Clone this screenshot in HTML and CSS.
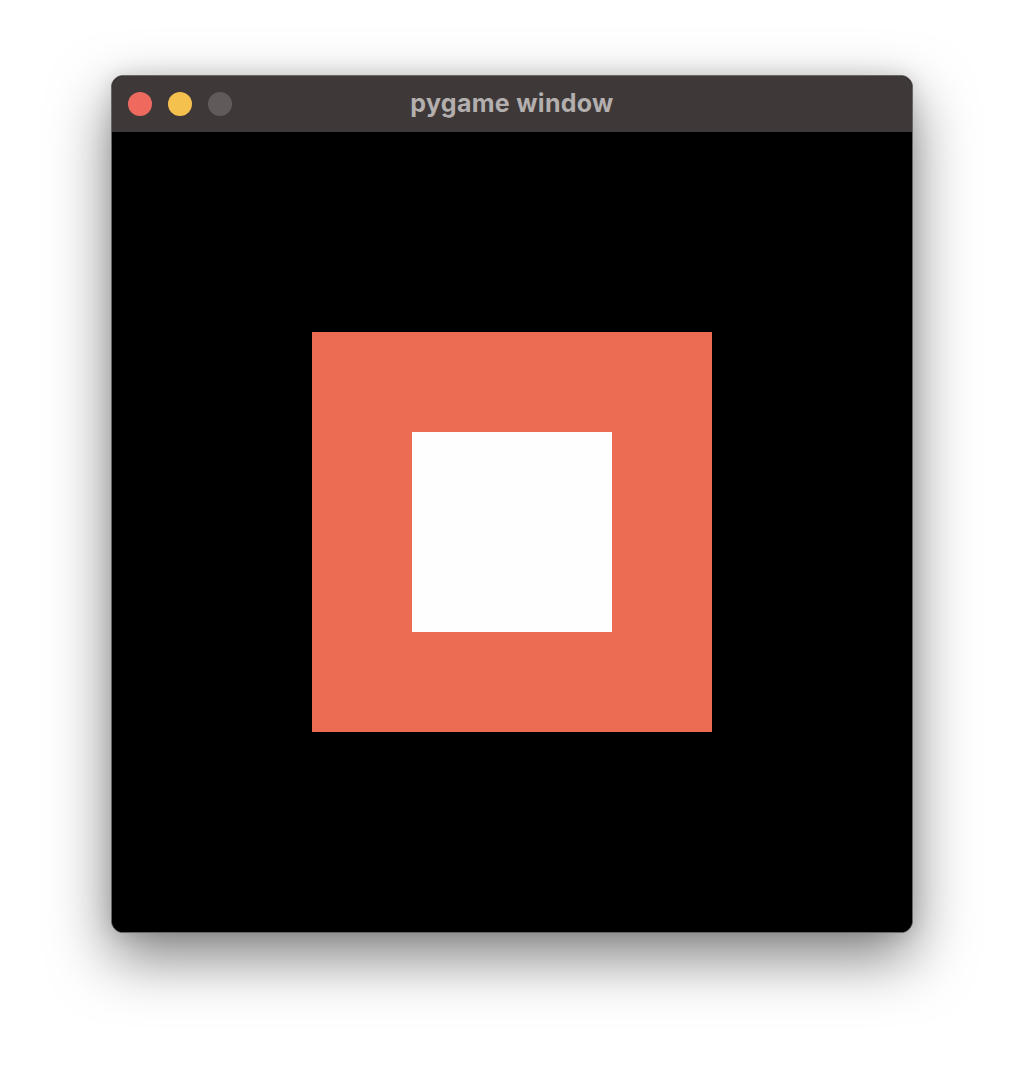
FILE: index.html
```html
<!DOCTYPE html>
<html>
<head>
<meta charset="utf-8">
<link rel="stylesheet" href="styles.css">
</head>
<body>
<div class="page">
  <div class="window">
    <div class="titlebar">
      <div class="lights">
        <span class="light red"></span>
        <span class="light yellow"></span>
        <span class="light gray"></span>
      </div>
      <div class="title">pygame window</div>
    </div>
    <div class="canvas">
      <div class="outer">
        <div class="inner"></div>
      </div>
    </div>
  </div>
</div>
</body>
</html>
```
FILE: styles.css
```css
html, body {
  margin: 0;
  padding: 0;
  background: #ffffff;
}
.page {
  width: 1024px;
  height: 1080px;
  padding: 75px 0 0 111px;
  box-sizing: border-box;
}
.window {
  width: 802px;
  border: 1px solid #6a6666;
  border-radius: 12px;
  overflow: hidden;
  box-sizing: border-box;
  box-shadow: 0 24px 60px rgba(0, 0, 0, 0.5), 0 0 20px rgba(0, 0, 0, 0.12);
  background: #000;
}
.titlebar {
  height: 56px;
  background: #3e3838;
  position: relative;
  display: flex;
  align-items: center;
  justify-content: center;
}
.lights {
  position: absolute;
  left: 16px;
  top: 16px;
  display: flex;
  gap: 16px;
}
.light {
  width: 24px;
  height: 24px;
  border-radius: 50%;
  display: block;
}
.red { background: #ee6a5e; }
.yellow { background: #f5c14e; }
.gray { background: #605a5a; }
.title {
  font-family: "Inter", "Liberation Sans", sans-serif;
  font-weight: 700;
  font-size: 25px;
  color: #b4afaf;
  letter-spacing: 0.3px;
  margin-top: -2px;
}
.canvas {
  width: 800px;
  height: 800px;
  background: #000;
  display: flex;
  align-items: center;
  justify-content: center;
}
.outer {
  width: 400px;
  height: 400px;
  background: #ec6c53;
  display: flex;
  align-items: center;
  justify-content: center;
}
.inner {
  width: 200px;
  height: 200px;
  background: #fefefe;
}
```
